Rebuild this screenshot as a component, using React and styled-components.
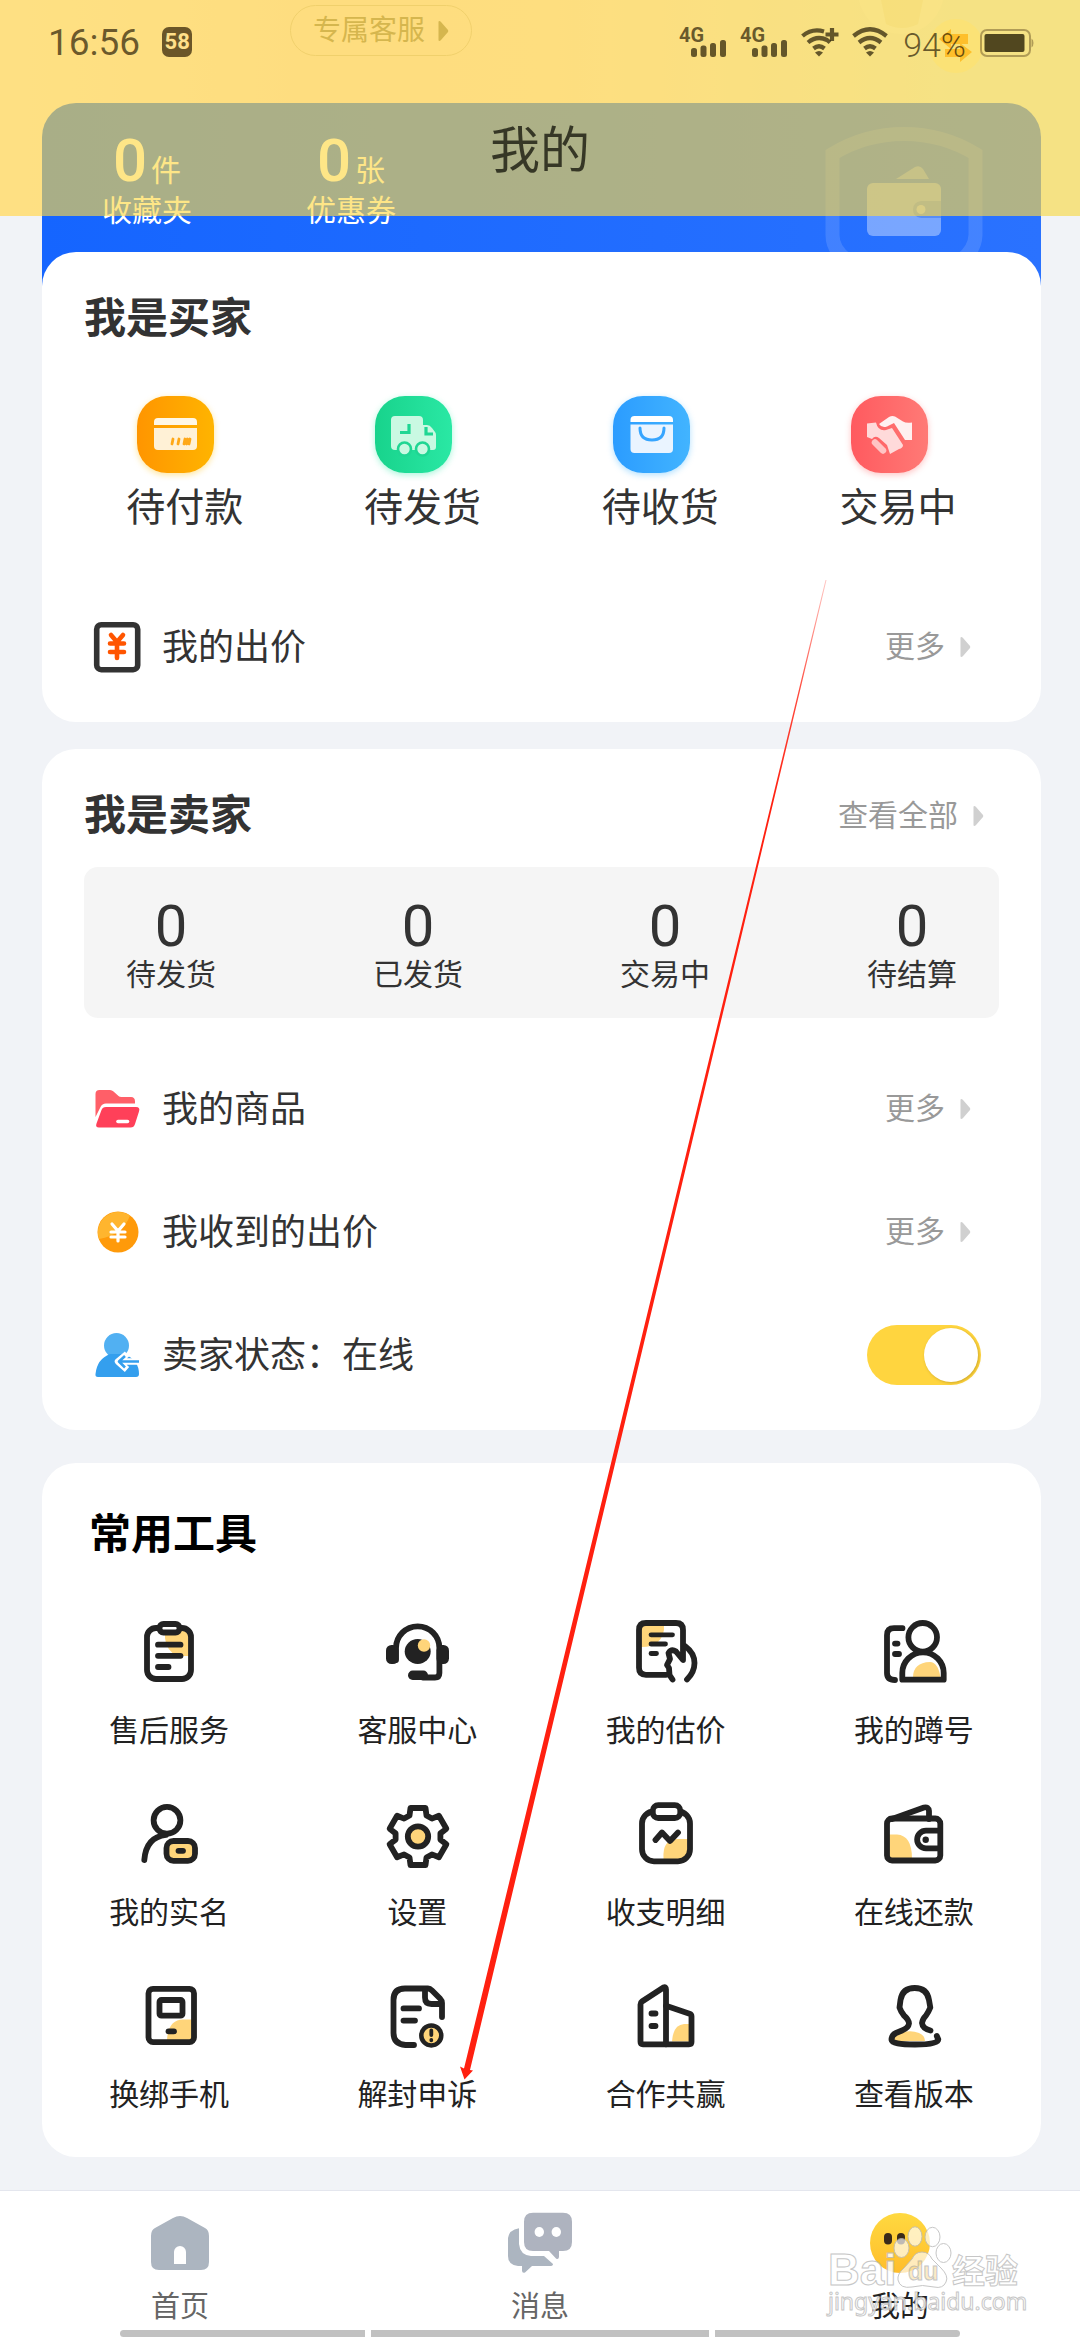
import React, { useState } from "react";
import styled, { createGlobalStyle } from "styled-components";

const GlobalStyle = createGlobalStyle`
  *, *::before, *::after { box-sizing: border-box; }
  body {
    margin: 0;
    background: #f1f3f7;
    font-family: Roboto, "Noto Sans CJK SC", sans-serif;
    color: #333;
  }
  a { color: inherit; text-decoration: none; }
  h1, h2, p { margin: 0; }
  svg { display: block; flex: none; overflow: visible; }
`;

const INK = "#222";
const SUN = "#ffd57a";

/* ---------- page frame ---------- */

const Page = styled.div`
  position: relative;
  display: flex;
  flex-direction: column;
  min-height: 100vh;
  overflow: hidden;
  background: #f1f3f7;
`;

const TopBar = styled.header`
  position: absolute;
  top: 0;
  left: 0;
  right: 0;
  z-index: 2;
  height: 216px;
  background: rgba(253, 216, 67, 0.64);
`;

const StatusBar = styled.div`
  display: flex;
  justify-content: space-between;
  align-items: flex-end;
  height: 57px;
  padding: 0 46px 0 48px;
  color: rgba(30, 20, 0, 0.68);
`;

const StatusGroup = styled.div`
  display: flex;
  align-items: flex-end;
  gap: ${(p) => p.$gap}px;
`;

const Clock = styled.time`
  font-size: 37px;
  line-height: 28px;
`;

const NetBadge = styled.span`
  width: 30px;
  border-radius: 7px;
  background: #6b5628;
  color: #ffe08a;
  font-size: 22px;
  font-weight: 700;
  line-height: 30px;
  text-align: center;
`;

const BatteryText = styled.span`
  font-size: 34px;
  font-weight: 300;
  line-height: 24px;
`;

const PageTitle = styled.h1`
  margin-top: 61px;
  font-size: 50px;
  font-weight: 400;
  line-height: 66px;
  text-align: center;
  color: rgba(20, 20, 10, 0.78);
`;

const Main = styled.main`
  display: flex;
  flex-direction: column;
  padding: 0 39px 0 42px;
`;

const Hero = styled.div`
  margin: 0 -39px 0 -42px;
  padding: 0 39px 0 42px;
  background: linear-gradient(90deg, #ffeff4 0%, #ffe6e8 30%, #ffe8e8 50%, #e6f4f6 90%) no-repeat;
  background-size: 100% 216px;
`;

const HeroTop = styled.div`
  display: flex;
  justify-content: space-between;
  height: 103px;
  padding: 5px 44px 0 248px;
`;

const SupportButton = styled.button`
  display: flex;
  align-items: center;
  gap: 12px;
  height: 51px;
  padding: 0 22px;
  border: 1px solid #d9c2b4;
  border-radius: 26px;
  background: transparent;
  color: #8f7a62;
  font-family: inherit;
  font-size: 28px;
  line-height: 40px;
`;

const Assets = styled.section`
  display: flex;
  justify-content: space-between;
  align-items: flex-start;
  height: 190px;
  padding: 0 46px 0 3px;
  border-radius: 34px 34px 0 0;
  background: linear-gradient(90deg, #1565ff, #2a72ff);
  color: #fff;
`;

const AssetList = styled.div`
  display: flex;
  padding-top: 28px;
`;

const Asset = styled.a`
  width: 204px;
  font-size: 30px;
  line-height: 40px;
  text-align: center;
`;

const AssetCount = styled.p`
  display: flex;
  justify-content: center;
  align-items: baseline;
  gap: 4px;
  height: 60px;
  line-height: 60px;

  strong {
    font-size: 60px;
    font-weight: 500;
  }
`;

/* ---------- cards ---------- */

const Card = styled.section`
  position: relative;
  margin-top: ${(p) => p.$gap}px;
  padding: ${(p) => p.$top || 37}px 0 ${(p) => p.$bottom || 14}px;
  border-radius: 34px;
  background: #fff;
`;

const CardHead = styled.div`
  display: flex;
  justify-content: space-between;
  align-items: center;
  padding: 0 47px 0 ${(p) => p.$left || 42}px;
`;

const CardTitle = styled.h2`
  font-size: 42px;
  font-weight: 700;
  line-height: 60px;
  color: ${(p) => p.$color || "#333"};
`;

const MoreLink = styled.a`
  display: flex;
  align-items: center;
  gap: 14px;
  font-size: 30px;
  line-height: 40px;
  color: #999;
`;

const OrderGrid = styled.div`
  display: grid;
  grid-template-columns: repeat(4, 1fr);
  margin: 47px 0 51px;
  padding: 0 24px;
`;

const OrderItem = styled.a`
  display: flex;
  flex-direction: column;
  align-items: center;
  gap: 9px;
  font-size: 39px;
  line-height: 52px;
`;

const OrderTile = styled.span`
  display: block;
  width: 77px;
  height: 77px;
  margin-right: 18px;
  border-radius: 30px;
  background: linear-gradient(90deg, ${(p) => p.$from}, ${(p) => p.$to});
  box-shadow: 0 2px 6px ${(p) => p.$glow};
`;

const Row = styled.div`
  display: flex;
  align-items: center;
  gap: 21px;
  height: 123px;
  padding: 0 60px 0 51px;
  font-size: 36px;
  line-height: 50px;
`;

const RowLabel = styled.label`
  flex: 1;
  padding-top: 2px;
`;

const Switch = styled.input`
  appearance: none;
  width: 114px;
  height: 60px;
  margin: 0;
  padding: 3px;
  border-radius: 30px;
  background: #ffd53f;

  &::before {
    content: "";
    display: block;
    width: 54px;
    height: 54px;
    border-radius: 50%;
    background: #fff;
    box-shadow: 1px 1px 3px rgba(120, 90, 0, 0.35);
  }

  &:checked::before {
    margin-left: 54px;
  }
`;

const StatBox = styled.div`
  display: flex;
  justify-content: space-between;
  margin: 21px 42px 29px;
  padding: 31px 42px 23px;
  border-radius: 14px;
  background: #f5f5f5;
`;

const Stat = styled.a`
  font-size: 30px;
  line-height: 40px;
  text-align: center;

  strong {
    display: block;
    font-size: 58px;
    font-weight: 400;
    line-height: 57px;
  }
`;

const ToolGrid = styled.div`
  display: grid;
  grid-template-columns: repeat(4, 1fr);
  row-gap: 47px;
  margin-top: 51px;
  padding: 0 3px;
`;

const Tool = styled.a`
  display: flex;
  flex-direction: column;
  align-items: center;
  gap: 23px;
  font-size: 30px;
  line-height: 40px;
  color: #222;
`;

/* ---------- bottom navigation ---------- */

const TabBar = styled.nav`
  position: relative;
  margin-top: 33px;
  padding-bottom: 3px;
  border-top: 1px solid #e4e6ee;
  background: #fff;
`;

const Tabs = styled.div`
  display: grid;
  grid-template-columns: repeat(3, 1fr);
  padding: 20px 0 3px;
`;

const Tab = styled.a`
  display: flex;
  flex-direction: column;
  align-items: center;
  gap: 12px;
  font-size: 29px;
  line-height: 40px;
  color: ${(p) => (p.$active ? "#222" : "#666")};
`;

const GestureBars = styled.div`
  display: flex;
  gap: 6px;
  height: 7px;
  margin: 0 120px;
`;

const GestureBar = styled.span`
  flex: ${(p) => p.$share};
  border-radius: ${(p) => p.$radius || "0"};
  background: #c1c1c1;
`;

const Pointer = styled.svg`
  position: absolute;
  top: 0;
  left: 0;
  z-index: 3;
  width: 100%;
  pointer-events: none;
`;

const Watermark = styled.div`
  position: absolute;
  right: 60px;
  bottom: 18px;
  width: 192px;
  opacity: 0.85;
  color: #fff;
  pointer-events: none;
`;

/* ---------- small drawings ---------- */

const Caret = ({ color = "#d0d0d0", width = 22 }) => (
  <svg width={width} height="22" viewBox={`0 0 ${width} 22`} aria-hidden="true">
    <path d="M1.500 1.500Q2.500 .5 4 2L11 10Q11.500 11 11 12L4 20Q2.500 21.500 1.500 20.500Z" fill={color} />
  </svg>
);

const Signal = () => (
  <svg width="47" height="31" viewBox="0 0 47 31" fill="currentColor" aria-hidden="true">
    <text x="0" y="16" fontSize="20" fontWeight="700" fontFamily="Roboto, sans-serif">4G</text>
    <rect x="12" y="22" width="6" height="9" rx="2.5" />
    <rect x="21.500" y="19.500" width="6" height="11.500" rx="2.5" />
    <rect x="31" y="17" width="6" height="14" rx="2.5" />
    <rect x="41" y="14" width="6" height="17" rx="2.5" />
  </svg>
);

const Wifi = ({ plus }) => (
  <svg width="37" height="30" viewBox="0 0 37 30" fill="none" stroke="currentColor" strokeWidth="4.200" aria-hidden="true">
    <path d={plus ? "M1.500 9Q11 1 23 4.500" : "M1.500 9Q18 -4.500 34.500 9"} />
    <path d={plus ? "M7 15.500Q16 8 26 13L29 15.500" : "M7 15.500Q18 6.500 29 15.500"} />
    <path d="M12.500 21.500Q18 17 23.500 21.500" />
    <path d="M14 25.500Q18 22.500 22 25.500L18 29.500Z" fill="currentColor" stroke="none" />
    {plus && <path d="M31 1v13M24.500 7.500h13" />}
  </svg>
);

const Battery = () => (
  <svg width="54" height="28" viewBox="0 0 54 28" aria-hidden="true">
    <rect x="1" y="1" width="49" height="26" rx="6" fill="none" stroke="#6b5628" strokeOpacity=".5" strokeWidth="2" />
    <rect x="4.500" y="5" width="40" height="18" rx="2" fill="#51471f" />
    <path d="M51.500 9.500q2 1 2 4.500t-2 4.500z" fill="#6b5628" fillOpacity=".5" />
  </svg>
);

const Mascot = () => (
  <svg width="140" height="75" viewBox="0 0 140 75" aria-hidden="true">
    <circle cx="44" cy="-14" r="43" fill="#fff" opacity=".35" />
    <path d="M24 -5h42l-5 24q-16 8-32 0z" fill="#c9a74a" opacity=".14" />
    <circle cx="99" cy="41" r="27" fill="#fff4b8" opacity=".6" />
    <path d="M82 34l12-10v5h17v10H94v5zM115 47l-12 10v-5H88v-8h15v-6z" fill="#ff9400" />
  </svg>
);

const ShieldWallet = () => (
  <svg width="180" height="145" viewBox="0 0 180 145" aria-hidden="true">
    <g transform="translate(0 7)" fill="#fff">
      <path d="M32 150Q17.500 140 17.500 125V44Q50 24 89 24T160.500 44V125Q160 140 146 150" fill="none" stroke="#fff" strokeWidth="14" opacity=".13" />
      <path d="M81 69L100 57q5-2 8 2l6 10z" opacity=".3" />
      <rect x="52" y="73" width="74" height="53" rx="6" opacity=".38" />
      <path d="M106 91h20v17h-20q-8-1-8-8.500t8-8.500z" fill="#2f6fe8" opacity=".45" />
      <circle cx="106" cy="99.500" r="4.500" opacity=".4" />
    </g>
  </svg>
);

const orders = [
  {
    label: "待付款", from: "#ff9500", to: "#ffb400", glow: "rgba(255,190,0,.4)",
    art: (
      <>
        <path d="M17 29v-3q0-4 4-4h35q4 0 4 4v3z" fill="#fff7e6" />
        <path d="M17 32h43v18q0 4-4 4H21q-4 0-4-4z" fill="#fff1d6" />
        <path d="M36 43l-1 5M42 43l-1 5M48 43l-1 5M50.500 43l-1 5M53 43l-1 5" stroke="#ffa817" strokeWidth="2.800" strokeLinecap="round" />
      </>
    ),
  },
  {
    label: "待发货", from: "#18d38c", to: "#2ae8a4", glow: "rgba(42,232,164,.4)",
    art: (
      <>
        <path d="M20 20h24q4 0 4 4v5h4q3 0 5 3l3 4q1 1 1 3v12q0 3-3 3H20q-4 0-4-4V24q0-4 4-4z" fill="#c9f9e2" />
        <path d="M25 36.500h9V28M51 31v7h7" fill="none" stroke="#1fd693" strokeWidth="3.200" />
        <g fill="#c9f9e2" stroke="#1fd693" strokeWidth="2.600">
          <circle cx="29.500" cy="53" r="6.500" />
          <circle cx="47.500" cy="53" r="6.500" />
        </g>
      </>
    ),
  },
  {
    label: "待收货", from: "#2b9cff", to: "#42b4ff", glow: "rgba(66,180,255,.4)",
    art: (
      <>
        <path d="M17.500 26v-2q0-4 4-4H56q4 0 4 4v2z" fill="#fff" />
        <path d="M17.500 28.500H60V53q0 4-4 4H21.500q-4 0-4-4z" fill="#eaf4ff" />
        <path d="M27 32q0 12 12 12t12-12" fill="none" stroke="#36a5ff" strokeWidth="3" strokeLinecap="round" />
      </>
    ),
  },
  {
    label: "交易中", from: "#ff5a5f", to: "#ff7a76", glow: "rgba(255,110,110,.4)",
    art: (
      <>
        <path d="M28 28L38 21q3-1.500 6-.5l8 5q3 2 9 1V44h-7L43 27l-7 3.500q-5 2-8-2.500z" fill="#fff0f0" />
        <path d="M16 27.500l9-1q2 9 10 7.500l6-2L52 49q0 3-4 4l-9 5-3-9-8-7q-4-3-7 1l-5-2z" fill="#ffdada" />
        <path d="M24 46.500l8 8" stroke="#ffc4c4" strokeWidth="6.500" strokeLinecap="round" />
      </>
    ),
  },
];

const BidIcon = () => (
  <svg width="48" height="54" viewBox="0 0 48 54" fill="none" aria-hidden="true">
    <rect x="3.700" y="4.700" width="41" height="45" rx="4.500" stroke="#333" strokeWidth="5.600" />
    <path d="M18 15l6 7 6-7M24 22v16M17 23.500h14M17 32h14" stroke="#ff5500" strokeWidth="4.600" strokeLinecap="round" />
  </svg>
);

const FolderIcon = () => (
  <svg width="48" height="54" viewBox="0 0 48 54" aria-hidden="true">
    <path d="M2.500 35V12q0-4 4-4H17q2 0 3.500 1.500l5 4.500q1 1 3 1H38q4 0 4 4.500v2H13q-4 0-5.500 3.500z" fill="#ff5f68" />
    <path d="M13 25h30q4.500 0 3 4.500L42 42q-1 3.500-4.500 3.500H6q-4 0-2.500-4L8.500 28q1-3 4.500-3z" fill="#ff4059" />
    <path d="M25 39.500h9.500" stroke="#fff" strokeWidth="3.600" strokeLinecap="round" />
  </svg>
);

const CoinIcon = () => (
  <svg width="48" height="54" viewBox="0 0 48 54" fill="none" aria-hidden="true">
    <circle cx="25" cy="27" r="20.500" fill="#ff9a0a" />
    <path d="M6 34A20.500 20.500 0 0 1 37 10.500Q30 30 6 34z" fill="#ffb52e" />
    <path d="M19 19l6 7 6-7M25 26v10M18 27h14M18 32h14" stroke="#fff" strokeWidth="3.200" strokeLinecap="round" />
  </svg>
);

const SellerIcon = () => (
  <svg width="48" height="54" viewBox="0 0 48 54" aria-hidden="true">
    <circle cx="23.500" cy="17.500" r="12.500" fill="#51b0f2" />
    <path d="M17 26h14q15 6 15 20 0 3-3 3H5q-3 0-2.500-3Q4 31 17 26z" fill="#349fee" />
    <path d="M48 33.500H26M34 26l-9 7.500 9 8" fill="none" stroke="#fff" strokeWidth="6.500" strokeLinejoin="round" />
    <path d="M46 33.500H26M32 28l-6 5.500 6 6" fill="none" stroke="#349fee" strokeWidth="2.600" strokeLinejoin="round" />
  </svg>
);

const gearPoints = Array.from({ length: 6 }, (_, i) => (i * Math.PI) / 3)
  .flatMap((a) =>
    [[-8.5, -21], [-7.5, -28.5], [7.5, -28.5], [8.5, -21]].map(([x, y]) =>
      `${(37 + x * Math.cos(a) - y * Math.sin(a)).toFixed(1)},${(38.5 + x * Math.sin(a) + y * Math.cos(a)).toFixed(1)}`
    )
  )
  .join(" ");

const tools = [
  {
    label: "售后服务",
    art: (
      <>
        <path d="M32 15h24v25H44Q33 34 32 22z" fill={SUN} stroke="none" />
        <rect x="14" y="12" width="44" height="51" rx="9" />
        <rect x="26.500" y="8" width="20" height="8.500" rx="4" fill="#fff" />
        <path d="M25 28.700h22.500M25 39.800h22.500M25 51h10.500" />
      </>
    ),
  },
  {
    label: "客服中心",
    art: (
      <>
        <path d="M15 44V32a21.700 21.700 0 0 1 43.400 0V57q0 4.500-4.500 4.500H42" />
        <rect x="5" y="29" width="12.500" height="19" rx="5.500" fill={INK} stroke="none" />
        <rect x="55.500" y="29" width="12.500" height="19" rx="5.500" fill={INK} stroke="none" />
        <rect x="27" y="54.500" width="20" height="9.500" rx="4.700" fill={INK} stroke="none" />
        <ellipse cx="36.700" cy="35.500" rx="13" ry="12.500" fill={INK} stroke="none" />
        <circle cx="43" cy="29.500" r="6.200" fill={SUN} stroke="none" />
      </>
    ),
  },
  {
    label: "我的估价",
    art: (
      <>
        <path d="M10 8h24q1 12-7 19-6 4.500-17 4z" fill={SUN} stroke="none" />
        <path d="M36 58.800H16q-7 0-7-7V14q0-7 7-7H46q7 0 7 7V44L46 35.500q-4.500-3-7.500 1.500l1.500 6-3 6 2 3 .5 7 3 4.500" />
        <path d="M55 30q9.500 7 9.500 17 0 9-7.500 16.500" />
        <path d="M21 18.800h21.500M21 28h14.500M21 37.500h5.500" strokeWidth="4.800" />
      </>
    ),
  },
  {
    label: "我的蹲号",
    art: (
      <>
        <path d="M35 61.500q0-15 17-15.500 8 0 10.500 15.500z" fill={SUN} stroke="none" />
        <path d="M24.500 12.200H16q-7 0-7 7V57q0 7 8 7" />
        <path d="M17 27.600h2.500M17 38h4" />
        <circle cx="44.700" cy="21.300" r="14.300" />
        <path d="M24.300 63.700V57a20.700 20.700 0 0 1 41.400 0v6.700z" />
      </>
    ),
  },
  {
    label: "我的实名",
    art: (
      <>
        <circle cx="34" cy="22.300" r="13.400" />
        <path d="M11.300 62Q13 39 33 36.800" />
        <rect x="33.500" y="43" width="28.500" height="19.800" rx="7" fill={SUN} />
        <path d="M45.500 52.800h4.500" />
      </>
    ),
  },
  {
    label: "设置",
    art: (
      <>
        <polygon points={gearPoints} />
        <circle cx="37" cy="38.500" r="10.200" fill={SUN} />
      </>
    ),
  },
  {
    label: "收支明细",
    art: (
      <>
        <path d="M33.500 61Q32 41 48 41h10v14q0 6-7 6z" fill={SUN} stroke="none" />
        <rect x="12" y="13.500" width="48" height="49.800" rx="12" />
        <rect x="22.800" y="7.200" width="27.500" height="12.800" rx="5.500" fill="#fff" />
        <path d="M25.500 42l6.500-7.500L40 43l8-8.500" />
      </>
    ),
  },
  {
    label: "在线还款",
    art: (
      <>
        <path d="M11 36.500h8q15 1 15 24H11z" fill={SUN} stroke="none" />
        <path d="M14 21L46 9.500q4.500-1 5 3.500v8" />
        <rect x="9" y="20.500" width="53.300" height="42" rx="5" />
        <path d="M62 32.700H48a8.800 8.800 0 0 0 0 17.700H62" />
        <circle cx="47.700" cy="41.700" r="3.200" fill={INK} stroke="none" />
      </>
    ),
  },
  {
    label: "换绑手机",
    art: (
      <>
        <path d="M34 60Q35 40 50 39.500h10V60z" fill={SUN} stroke="none" />
        <rect x="15.500" y="8.800" width="45.500" height="53.300" rx="4.500" />
        <rect x="26.500" y="20" width="23" height="15.700" rx="2" />
        <path d="M35.500 51.400h5.500" />
      </>
    ),
  },
  {
    label: "解封申诉",
    art: (
      <>
        <path d="M33 65h-8.500q-12-1-12-12V20q0-11.500 11.500-11.500H47q2 0 4 2L59 18.500q2 2 2 4.500V37" />
        <path d="M44 9.500v8q0 6.500 6.500 6.500H60" />
        <path d="M22.500 28.400H38M22.500 40.600h11.500" />
        <circle cx="50.300" cy="55.400" r="10" fill={SUN} strokeWidth="4.500" />
        <path d="M50.300 50.500v4.500M50.300 60v.3" strokeWidth="3.800" />
      </>
    ),
  },
  {
    label: "合作共赢",
    art: (
      <>
        <path d="M42 61.500Q43 45 54 44h7.500v17.500z" fill={SUN} stroke="none" />
        <path d="M36 64.300H13q-2.500 0-2.500-2.500V24.500q0-2 1.500-3L33.500 7.500q2.500-1 2.500 2z" />
        <path d="M36 25.700l23.500 8q2 .7 2 2.500V62q0 2.300-2.500 2.300H36" />
        <path d="M21.500 33.500h4M21.500 46h4" />
      </>
    ),
  },
  {
    label: "查看版本",
    art: (
      <>
        <path d="M15 61q0-6 9-8.500 9-2.500 17 .5 6 2.500 6 8z" fill={SUN} stroke="none" />
        <path d="M52.500 50.500Q44.500 48.500 44 43 44.500 39 48 35.500 51 31 52.300 27.500L51 20Q49 8 36.700 8T22.500 20L21.500 27.500Q23 32 26 35.500 31 40 31 43.500 30.500 48 24 50.500L18 53Q13.500 55 13.500 60 14 64.500 37 64.500T60.300 59.500L58.800 56" />
      </>
    ),
  },
];

const HomeIcon = () => (
  <svg width="64" height="64" viewBox="0 0 64 64" fill="#acb5c0" aria-hidden="true">
    <path fillRule="evenodd" d="M25 7q7-4 14 0L57 17q4 2 4 8v26q0 8-8 8H11q-8 0-8-8V25q0-6 4-8zM26 53h12V41a6 6 0 0 0-12 0z" />
  </svg>
);

const ChatIcon = () => (
  <svg width="64" height="64" viewBox="0 0 64 64" aria-hidden="true">
    <path d="M11 17.300V33q1 11 12 12h13l9 8q0 2-3 2H24l-7 6.500q-3 1-3-2V55h-4Q0 54 0 45V27q1-8 11-9.700z" fill="#acb5c0" />
    <path d="M25 1.700H55q9 0 9 9V31q0 9-9 9h-4v6q-.5 3-3 1.500L41 40H25q-9 0-9-9V10.700q0-9 9-9z" fill="#aeb3bf" />
    <ellipse cx="31.300" cy="21" rx="4.700" ry="5" fill="#fff" />
    <ellipse cx="48.300" cy="21" rx="4.700" ry="5" fill="#fff" />
  </svg>
);

const FaceIcon = () => (
  <svg width="64" height="64" viewBox="0 0 64 64" aria-hidden="true">
    <defs>
      <linearGradient id="face" x1="0" y1="0" x2="0" y2="1">
        <stop offset="0" stopColor="#ffd940" />
        <stop offset="1" stopColor="#ffbd2b" />
      </linearGradient>
    </defs>
    <circle cx="32" cy="32" r="30" fill="url(#face)" />
    <rect x="16" y="22" width="8" height="11.500" rx="4" fill="#3a2a1a" />
    <rect x="29" y="22" width="8" height="11.500" rx="4" fill="#3a2a1a" />
  </svg>
);

const More = ({ children }) => (
  <MoreLink href="#more">
    {children}
    <Caret />
  </MoreLink>
);

export default function App() {
  const [online, setOnline] = useState(true);

  return (
    <Page>
      <GlobalStyle />

      <TopBar>
        <StatusBar>
          <StatusGroup $gap={22}>
            <Clock>16:56</Clock>
            <NetBadge>58</NetBadge>
          </StatusGroup>
          <StatusGroup $gap={14}>
            <Signal />
            <Signal />
            <Wifi plus />
            <Wifi />
            <BatteryText>94%</BatteryText>
            <Battery />
          </StatusGroup>
        </StatusBar>
        <PageTitle>我的</PageTitle>
      </TopBar>

      <Main>
        <Hero>
          <HeroTop>
            <SupportButton type="button">
              专属客服
              <Caret color="#8f7a62" width={12} />
            </SupportButton>
            <Mascot />
          </HeroTop>
          <Assets>
            <AssetList>
              <Asset href="#favorites">
                <AssetCount><strong>0</strong>件</AssetCount>
                收藏夹
              </Asset>
              <Asset href="#coupons">
                <AssetCount><strong>0</strong>张</AssetCount>
                优惠券
              </Asset>
            </AssetList>
            <ShieldWallet />
          </Assets>
        </Hero>

        <Card $gap={-41}>
          <CardHead>
            <CardTitle>我是买家</CardTitle>
          </CardHead>
          <OrderGrid>
            {orders.map((o) => (
              <OrderItem key={o.label} href="#orders">
                <OrderTile $from={o.from} $to={o.to} $glow={o.glow}>
                  <svg width="77" height="77" viewBox="0 0 77 77" aria-hidden="true">{o.art}</svg>
                </OrderTile>
                {o.label}
              </OrderItem>
            ))}
          </OrderGrid>
          <Row>
            <BidIcon />
            <RowLabel as="span">我的出价</RowLabel>
            <More>更多</More>
          </Row>
        </Card>

        <Card $gap={27}>
          <CardHead>
            <CardTitle>我是卖家</CardTitle>
            <More>查看全部</More>
          </CardHead>
          <StatBox>
            {["待发货", "已发货", "交易中", "待结算"].map((label) => (
              <Stat key={label} href="#sales">
                <strong>0</strong>
                {label}
              </Stat>
            ))}
          </StatBox>
          <Row>
            <FolderIcon />
            <RowLabel as="span">我的商品</RowLabel>
            <More>更多</More>
          </Row>
          <Row>
            <CoinIcon />
            <RowLabel as="span">我收到的出价</RowLabel>
            <More>更多</More>
          </Row>
          <Row>
            <SellerIcon />
            <RowLabel htmlFor="seller-online">卖家状态：在线</RowLabel>
            <Switch
              id="seller-online"
              type="checkbox"
              checked={online}
              onChange={(e) => setOnline(e.target.checked)}
            />
          </Row>
        </Card>

        <Card $gap={33} $top={42} $bottom={42}>
          <CardHead $left={47}>
            <CardTitle $color="#000">常用工具</CardTitle>
          </CardHead>
          <ToolGrid>
            {tools.map((t) => (
              <Tool key={t.label} href="#tool">
                <svg
                  width="72"
                  height="72"
                  viewBox="0 0 72 72"
                  fill="none"
                  stroke={INK}
                  strokeWidth="5.800"
                  strokeLinecap="round"
                  strokeLinejoin="round"
                  aria-hidden="true"
                >
                  {t.art}
                </svg>
                {t.label}
              </Tool>
            ))}
          </ToolGrid>
        </Card>
      </Main>

      <TabBar>
        <Tabs>
          <Tab href="#home"><HomeIcon />首页</Tab>
          <Tab href="#messages"><ChatIcon />消息</Tab>
          <Tab href="#me" $active><FaceIcon />我的</Tab>
        </Tabs>
        <GestureBars>
          <GestureBar $share={245} $radius="4px 0 0 4px" />
          <GestureBar $share={338} />
          <GestureBar $share={245} $radius="0 4px 4px 0" />
        </GestureBars>
        <Watermark>
          <svg width="192" height="96" viewBox="0 0 192 96" fill="#fff" stroke="#bdbdbd" strokeWidth="1" aria-hidden="true">
            <g fillOpacity=".8">
              <ellipse cx="73.500" cy="22" rx="7.500" ry="9.500" />
              <ellipse cx="87" cy="10.500" rx="7" ry="9.700" />
              <ellipse cx="104.500" cy="11" rx="7.500" ry="9.700" />
              <ellipse cx="115.500" cy="27" rx="7.500" ry="9.500" />
              <path d="M94 26q7 0 10 7l9 9q8 8 5 14-3 7-12 5-12-3-22 0-12 2-14-7-1-6 6-12l8-9q3-7 10-7z" />
            </g>
            <g fontFamily="Liberation Sans, Arial, sans-serif" fontWeight="700">
              <text x="0" y="59" fontSize="44">Bai</text>
              <text x="80" y="54" fontSize="25" fill="#f8d27a" fillOpacity=".5">du</text>
            </g>
            <text x="124" y="57" fontSize="33" fontWeight="700" fontFamily="Noto Sans CJK SC, sans-serif">经验</text>
            <text x="0" y="84" fontSize="23" fontFamily="Noto Sans, sans-serif">jingyan.baidu.com</text>
          </svg>
        </Watermark>
      </TabBar>

      <Pointer viewBox="0 0 1080 2340" aria-hidden="true">
        <defs>
          <linearGradient id="trail" x1="0" y1="580" x2="0" y2="800" gradientUnits="userSpaceOnUse">
            <stop offset="0" stopColor="#ff2010" stopOpacity=".25" />
            <stop offset=".5" stopColor="#ff2010" stopOpacity=".8" />
            <stop offset="1" stopColor="#ff2010" />
          </linearGradient>
        </defs>
        <path d="M825.500 580H826.500L470 2070L473 2070.500L464.500 2079.500L460 2066.500L464 2068.500Z" fill="url(#trail)" />
      </Pointer>
    </Page>
  );
}
